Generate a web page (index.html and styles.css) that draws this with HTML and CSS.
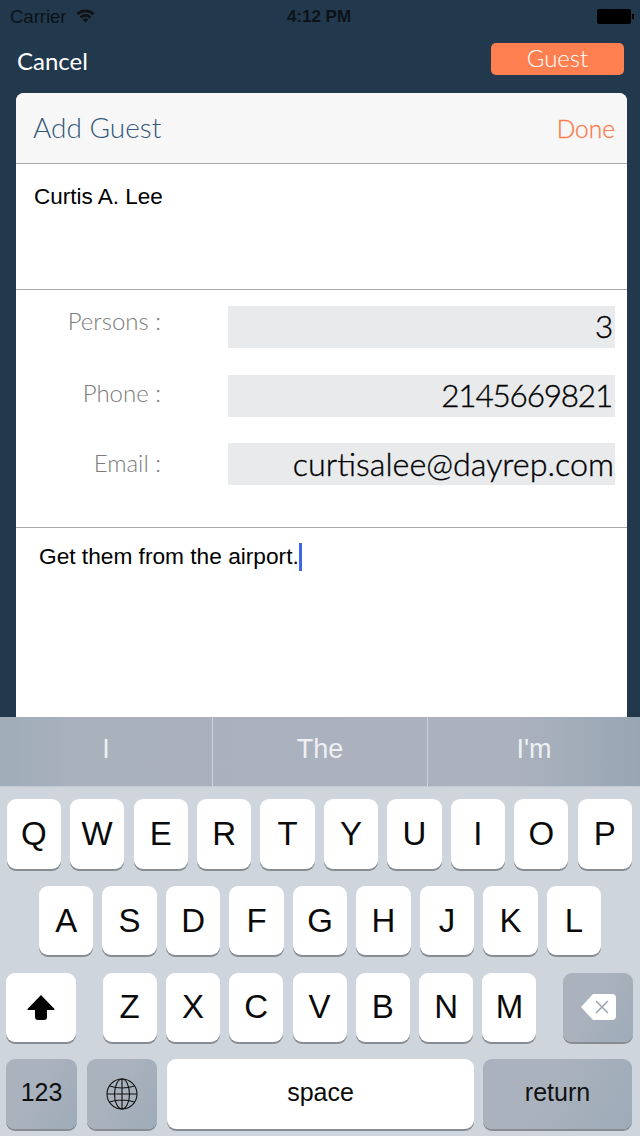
FILE: index.html
```html
<!DOCTYPE html>
<html lang="en">
<head>
  <meta charset="UTF-8">
  <meta name="viewport" content="width=device-width, initial-scale=1.0">
  <title>Add Guest</title>
  <link rel="stylesheet" href="styles.css">
</head>
<body>

<!-- status bar -->
<div class="status">
  <div class="status-left">
    <span class="carrier">Carrier</span>
    <svg class="wifi" width="19" height="15" viewBox="0 0 19 15">
      <path d="M0.5 5 A13 13 0 0 1 18.5 5 L16.6 7.1 A10.3 10.3 0 0 0 2.4 7.1 Z" fill="#111"/>
      <path d="M3.6 8.4 A8.6 8.6 0 0 1 15.4 8.4 L13.5 10.4 A6 6 0 0 0 5.5 10.4 Z" fill="#111"/>
      <path d="M6.7 11.6 A4.2 4.2 0 0 1 12.3 11.6 L9.5 14.6 Z" fill="#111"/>
    </svg>
  </div>
  <div class="status-time">4:12 PM</div>
  <div class="status-right">
    <div class="battery"></div>
    <div class="battery-nub"></div>
  </div>
</div>

<!-- nav -->
<div class="nav">
  <span class="nav-cancel">Cancel</span>
  <span class="nav-guest">Guest</span>
</div>

<!-- card -->
<div class="card">
  <div class="card-head">
    <span class="card-title">Add Guest</span>
    <span class="card-done">Done</span>
  </div>
  <div class="name-box">Curtis A. Lee</div>
  <div class="fields">
    <div class="field">
      <span class="field-label">Persons :</span>
      <span class="field-value digits">3</span>
    </div>
    <div class="field field-phone">
      <span class="field-label">Phone :</span>
      <span class="field-value digits">2145669821</span>
    </div>
    <div class="field field-email">
      <span class="field-label">Email :</span>
      <span class="field-value">curtisalee@dayrep.com</span>
    </div>
  </div>
  <div class="note">Get them from the airport.<span class="caret"></span></div>
</div>

<!-- keyboard -->
<div class="keyboard">
  <div class="suggest">
    <span>I</span>
    <span>The</span>
    <span>I'm</span>
  </div>
  <div class="keys">
    <div class="row row-top">
      <span class="key">Q</span><span class="key">W</span><span class="key">E</span><span class="key">R</span><span class="key">T</span><span class="key">Y</span><span class="key">U</span><span class="key">I</span><span class="key">O</span><span class="key">P</span>
    </div>
    <div class="row row-mid">
      <span class="key">A</span><span class="key">S</span><span class="key">D</span><span class="key">F</span><span class="key">G</span><span class="key">H</span><span class="key">J</span><span class="key">K</span><span class="key">L</span>
    </div>
    <div class="row row-third">
      <span class="key key-shift">
        <svg width="28" height="25" viewBox="0 0 28 25"><path d="M14 0 L27.500 14 Q28 15 27 15 L20 15 L20 22 Q20 25 17 25 L11 25 Q8 25 8 22 L8 15 L1 15 Q0 15 0.500 14 Z" fill="#000"/></svg>
      </span>
      <div class="letters">
        <span class="key">Z</span><span class="key">X</span><span class="key">C</span><span class="key">V</span><span class="key">B</span><span class="key">N</span><span class="key">M</span>
      </div>
      <span class="key key-dark key-del">
        <svg width="35" height="26" viewBox="0 0 35 26">
          <path d="M12 0 L31 0 Q35 0 35 4 L35 22 Q35 26 31 26 L12 26 L0 13 Z" fill="#fff"/>
          <path d="M15 7 L27 19 M27 7 L15 19" stroke="#9aa3ae" stroke-width="1.5" fill="none"/>
        </svg>
      </span>
    </div>
    <div class="row row-bottom">
      <span class="key key-dark key-small key-123">123</span>
      <span class="key key-dark key-globe">
        <svg width="32" height="32" viewBox="0 0 32 32" fill="none" stroke="#111" stroke-width="1.1">
          <circle cx="16" cy="16" r="15"/>
          <ellipse cx="16" cy="16" rx="7.5" ry="15"/>
          <path d="M16 1 V31 M1 16 H31 M3.5 8 Q16 12 28.500 8 M3.500 24 Q16 20 28.500 24"/>
        </svg>
      </span>
      <span class="key key-small key-space">space</span>
      <span class="key key-dark key-small key-return">return</span>
    </div>
  </div>
</div>

</body>
</html>
```

FILE: styles.css
```css
html, body { margin: 0; padding: 0; }
body {
  width: 640px;
  height: 1136px;
  overflow: hidden;
  background: #22384d;
  display: flex;
  flex-direction: column;
  font-family: "Liberation Sans", Arial, sans-serif;
}

/* status bar */
.status {
  height: 33px;
  padding: 0 7px 0 5px;
  display: grid;
  grid-template-columns: 1fr auto 1fr;
  align-items: center;
  font-size: 17px;
  color: #0c1218;
}
.status-left { display: flex; align-items: center; gap: 9px; padding-left: 5px; }
.carrier { font-size: 18.5px; }
.wifi { display: block; margin-top: -2px; }
.status-time { font-weight: bold; }
.status-right { display: flex; align-items: center; justify-content: flex-end; gap: 1px; margin-right: -1px; }
.battery { width: 34px; height: 15px; background: #000; border-radius: 2px; }
.battery-nub { width: 2px; height: 5px; background: #000; }

/* nav */
.nav {
  height: 60px;
  padding: 10px 16px 0 17px;
  box-sizing: border-box;
  display: flex;
  justify-content: space-between;
  align-items: flex-start;
  font-family: Lato, sans-serif;
  color: #fff;
}
.nav-cancel { font-size: 24px; line-height: 36px; }
.nav-guest {
  width: 133px;
  height: 32px;
  background: #ff7f50;
  border-radius: 5px;
  text-align: center;
  font-size: 24px;
  font-weight: 300;
  line-height: 30px;
}

/* card */
.card {
  flex: 1;
  margin: 0 13px 0 16px;
  background: #fff;
  border-radius: 8px 8px 0 0;
  font-family: Lato, sans-serif;
  overflow: hidden;
}
.card-head {
  height: 70px;
  padding: 0 12px 0 17px;
  display: flex;
  justify-content: space-between;
  align-items: center;
  background: #f7f7f7;
  border-bottom: 1px solid #a9a9a9;
}
.card-title { font-size: 28px; font-weight: 300; color: #34587a; margin-top: -2px; }
.card-done { font-size: 24.500px; font-weight: 300; -webkit-text-stroke: 0.3px #fb7b4c; color: #fb7b4c; }

.name-box {
  height: 126px;
  box-sizing: border-box;
  padding: 20px 18px;
  font-family: "Liberation Sans", Arial, sans-serif;
  font-size: 22.5px;
  line-height: 25px;
  color: #000;
  border-bottom: 1px solid #a9a9a9;
}

/* fields */
.fields {
  height: 238px;
  box-sizing: border-box;
  padding: 16px 12px 0 0;
  display: flex;
  flex-direction: column;
  gap: 26.500px;
  border-bottom: 1px solid #a9a9a9;
}
.field { display: flex; height: 42px; }
.field-label {
  width: 145px;
  margin-right: 67px;
  text-align: right;
  font-size: 24px;
  font-weight: 300;
  line-height: 30px;
  color: #7b7b7b;
}
.field-phone .field-label { padding-top: 3px; }
.field-email .field-label { padding-top: 5px; }
.field-value {
  flex: 1;
  padding-right: 1px;
  background: #e9eaec;
  text-align: right;
  font-size: 32.300px;
  font-weight: 300;
  -webkit-text-stroke: 0.35px #000;
  line-height: 41px;
  color: #000;
}
.digits { font-size: 31.500px; letter-spacing: -1.2px; padding-right: 3px; }

/* note */
.note {
  padding: 15px 23px;
  font-family: "Liberation Sans", Arial, sans-serif;
  font-size: 22.700px;
  line-height: 25px;
  color: #000;
}
.caret {
  display: inline-block;
  width: 3px;
  height: 28px;
  background: #3f67e8;
  vertical-align: -7px;
}

/* keyboard */
.keyboard { height: 419px; flex-shrink: 0; background: #cfd5dc; }
.suggest {
  height: 70px;
  display: grid;
  grid-template-columns: 213px 215px 1fr;
  background: linear-gradient(90deg, #9fadb9 0, #a9b1bd 12%, #abb2be 80%, #98a6b3 100%);
  border-bottom: 1px solid #c3cad2;
  box-sizing: border-box;
}
.suggest span {
  text-align: center;
  font-size: 27px;
  line-height: 65px;
  color: #eef0f3;
  border-right: 1px solid #cfd3da;
}
.suggest span:last-child { border-right: none; }

.keys {
  padding: 12px 8px 0 6px;
  display: flex;
  flex-direction: column;
  gap: 17.330px;
}
.row { display: flex; height: 69.500px; }
.row-top { gap: 9.200px; padding-left: 0.6px; }
.row-mid { gap: 9.200px; padding: 0 31px 0 33px; }
.row-third { justify-content: space-between; margin-right: -1px; }
.letters { display: flex; gap: 9.300px; }
.row-bottom { gap: 10px; margin-right: -1px; }

.key {
  flex: 1;
  min-width: 54px;
  display: flex;
  align-items: center;
  justify-content: center;
  background: #fff;
  border-radius: 9px;
  box-shadow: 0 2px 0 #878c93;
  font-size: 33px;
  color: #0a0a0a;
}
.letters .key { width: 54px; }
.key-dark { background: linear-gradient(120deg, #aab2bd 40%, #9dabb8 100%); }
.key-small { font-size: 25px; padding-bottom: 3px; box-sizing: border-box; }
.key-shift { flex: none; width: 70px; }
.key-del { flex: none; width: 70px; }
.key-123 { flex: none; width: 71px; color: #111; }
.key-globe { flex: none; width: 70px; }
.key-space { flex: none; width: 307px; }
.key-return { flex: none; width: 149px; margin-left: -1px; color: #111; }
```
